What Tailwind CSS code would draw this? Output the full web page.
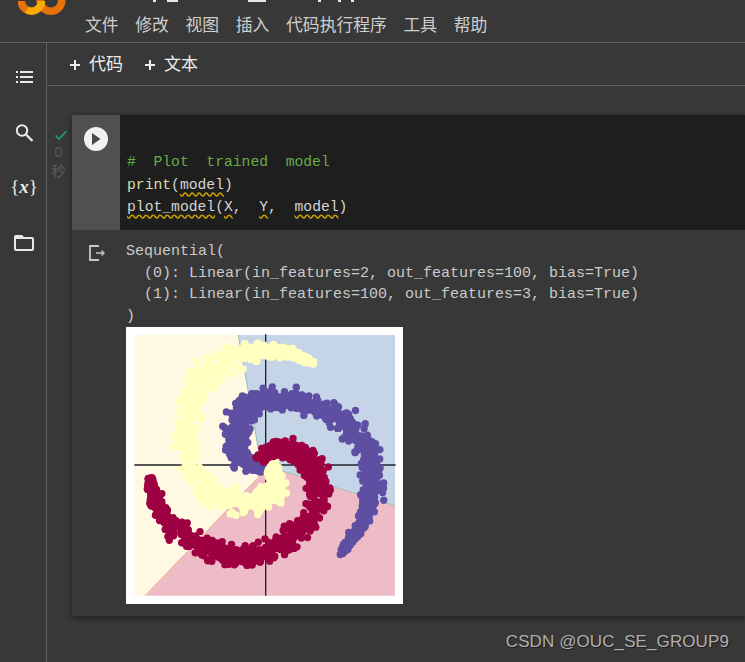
<!DOCTYPE html>
<html lang="zh">
<head>
  <meta charset="UTF-8" />
  <title>Colab</title>
  <script src="https://cdn.jsdelivr.net/npm/@tailwindcss/browser@4"></script>
</head>
<body class="bg-[#383838] h-[662px] overflow-hidden flex flex-col font-['Liberation_Sans','Noto_Sans_CJK_SC',sans-serif] text-[#d5d5d5]">

  <!-- top bar -->
  <header class="relative h-[43px] shrink-0 border-b border-[#5f5f5f] flex overflow-hidden">
    <div class="w-[85px] shrink-0 pl-[18px]">
      <svg width="48" height="16" viewBox="0 0 48 16" class="block" fill="none" stroke-width="7.500">
        <circle cx="33" cy="0.500" r="10.800" stroke="#e8710a"/>
        <path d="M3.500 1A10 10 0 0 0 8.500 9.700" stroke="#e8710a"/>
        <path d="M8.500 9.700A10 10 0 0 0 23.500 1" stroke="#f9ab00"/>
      </svg>
    </div>
    <nav class="flex gap-[16.700px] text-[16.800px] leading-[24px] pt-[14px] text-[#cfcfcf]">
      <span>文件</span><span>修改</span><span>视图</span><span>插入</span><span>代码执行程序</span><span>工具</span><span>帮助</span>
    </nav>
    <!-- bottom edge of the title, the rest is cut off by the window -->
    <div class="absolute left-[153px] top-0 flex items-start">
      <i class="w-[3px] h-[2px] bg-[#e8e8e8]"></i>
      <i class="w-[11px] h-[2px] bg-[#e8e8e8] ml-[11px]"></i>
      <i class="w-[18px] h-[2px] bg-[#e8e8e8] ml-[70px]"></i>
      <i class="w-[3px] h-[2px] bg-[#e8e8e8] ml-[52px]"></i>
      <i class="w-[3px] h-[2px] bg-[#e8e8e8] ml-[17px]"></i>
      <i class="w-[3px] h-[2px] bg-[#e8e8e8] ml-[10px]"></i>
    </div>
  </header>

  <div class="flex flex-1 min-h-0">
    <!-- side rail -->
    <aside class="w-[47px] shrink-0 border-r border-[#5f5f5f] flex flex-col items-center pt-[22px] pl-[2px] gap-[31px] text-[#e8e8e8]">
      <svg width="24" height="24" viewBox="0 0 24 24" fill="currentColor"><path d="M8 6h13v2H8zM8 11h13v2H8zM8 16h13v2H8zM4 6h2v2H4zM4 11h2v2H4zM4 16h2v2H4z"/></svg>
      <svg width="24" height="24" viewBox="0 0 24 24" fill="none" stroke="currentColor" stroke-width="2"><circle cx="10" cy="10.500" r="5.200"/><path d="M14 14.500l6.500 6.500" stroke-width="2.300"/></svg>
      <span class="h-[24px] w-[24px] flex items-center justify-center text-[19px] font-['Liberation_Serif',serif] whitespace-nowrap">{<b class="italic">x</b>}</span>
      <svg width="24" height="24" viewBox="0 0 24 24" fill="currentColor" class="mt-[1px]"><path d="M10 4H4a2 2 0 0 0-2 2v12a2 2 0 0 0 2 2h16a2 2 0 0 0 2-2V8a2 2 0 0 0-2-2h-8l-2-2zm-6 4h16v10H4V8z"/></svg>
    </aside>

    <main class="flex-1 min-w-0 flex flex-col">
      <!-- toolbar -->
      <div class="h-[43px] shrink-0 border-b border-[#5f5f5f] flex items-center pl-[22px] pt-[2px] gap-[21px] text-[17px] text-[#eeeeee]">
        <div class="flex items-center gap-[8px]">
          <svg width="12" height="12" viewBox="0 0 12 12" fill="currentColor"><path d="M5 1h2v4h4v2H7v4H5V7H1V5h4z"/></svg>
          <span>代码</span>
        </div>
        <div class="flex items-center gap-[8px]">
          <svg width="12" height="12" viewBox="0 0 12 12" fill="currentColor"><path d="M5 1h2v4h4v2H7v4H5V7H1V5h4z"/></svg>
          <span>文本</span>
        </div>
      </div>

      <!-- cell -->
      <div class="flex mt-[29px]">
        <div class="w-[25px] shrink-0 flex flex-col items-center pt-[13px] text-[#5c5c5c] text-[14px] leading-[19px]">
          <svg width="14" height="14" viewBox="0 0 14 14" fill="none" stroke="#1ea362" stroke-width="1.600" class="ml-[2px]"><path d="M1.500 7.500l3.500 3.500 7.500-8"/></svg>
          <span class="mt-[1px] -ml-[2px]">0</span>
          <span class="-ml-[2px]">秒</span>
        </div>
        <div class="flex-1 min-w-0 h-[501px] shadow-[0_2px_6px_rgba(0,0,0,0.45)]">
          <div class="flex h-[115px] bg-[#1e1e1e]">
            <div class="w-[48px] shrink-0 bg-[#505050] flex justify-center pt-[12px]">
              <div class="w-[24px] h-[24px] rounded-full bg-[#f1f1f1] flex items-center justify-center">
                <svg width="10" height="12" viewBox="0 0 10 12" fill="#4a4a4a"><path d="M1 0l8.500 6L1 12z"/></svg>
              </div>
            </div>
            <pre class="pl-[7px] pt-[36px] font-['Liberation_Mono',monospace] text-[14.700px] leading-[22.500px] text-[#d4d4d4]"><span class="text-[#67aa48]">#  Plot  trained  model</span>
<span class="text-[#dcdcaa]">print</span>(<span class="underline decoration-wavy decoration-[#c9a000] underline-offset-[3px]">model</span>)
<span class="underline decoration-wavy decoration-[#c9a000] underline-offset-[3px]">plot_model</span>(<span class="underline decoration-wavy decoration-[#c9a000] underline-offset-[3px]">X</span>,  <span class="underline decoration-wavy decoration-[#c9a000] underline-offset-[3px]">Y</span>,  <span class="underline decoration-wavy decoration-[#c9a000] underline-offset-[3px]">model</span>)</pre>
          </div>
          <div class="flex pt-[11px]">
            <div class="w-[48px] shrink-0 flex justify-center pl-[2px] pt-[1px]">
              <svg width="22" height="22" viewBox="0 0 22 22" fill="none" stroke="#c8c8c8" stroke-width="1.800"><path d="M13 4H4v14h9"/><path d="M10 11h8M15.500 8.500L18 11l-2.500 2.500" stroke-width="1.300"/></svg>
            </div>
            <div class="pl-[6px]">
              <pre class="font-['Liberation_Mono',monospace] text-[15px] leading-[21.700px] text-[#cacaca]">Sequential(
  (0): Linear(in_features=2, out_features=100, bias=True)
  (1): Linear(in_features=100, out_features=3, bias=True)
)</pre>
              <div class="w-[277px] h-[277px] bg-white -mt-[1px]">
                <svg id="plot" width="277" height="277" viewBox="18 6 831 831" class="block blur-[0.3px]">
                  <rect x="43" y="30" width="782" height="782" fill="#fff8e3"/>
                  <polygon points="355,30 825,30 825,542 445,425 420,400" fill="#c6d4e8"/>
                  <polygon points="445,425 825,542 825,812 75,812" fill="#edbcc7"/>
                  <path d="M355 30L420 400" stroke="#8fbfb0" stroke-width="3" fill="none"/>
                  <path d="M445 425L825 542" stroke="#a3c4a8" stroke-width="3" fill="none"/>
                  <path d="M445 425L75 812" stroke="#f2b98c" stroke-width="3" fill="none"/>
                  <path d="M437 28V812M43 420H827" stroke="#1f232b" stroke-width="4" fill="none"/>
                  <g id="dots"></g>
                </svg>
              </div>
            </div>
          </div>
        </div>
      </div>
    </main>
  </div>

  <div class="absolute right-[16px] top-[632px] text-[17px] leading-[20px] text-[#b0b0b0] tracking-[0.1px] [text-shadow:1px_1px_1px_rgba(0,0,0,0.5)]">CSDN @OUC_SE_GROUP9</div>

  <script>
    // scatter of the three spiral arms, seeded so every render is the same
    let seed = 12345;
    function rnd() {
      seed = (seed * 16807) % 2147483647;
      return seed / 2147483647;
    }

    const arms = [
      { color: "#5e4fa2", pts: [[430,425],[380,420],[345,370],[350,300],[385,240],[450,225],[530,222],[610,245],[680,295],[735,365],[760,440],[755,510],[735,575],[700,630],[660,690]] },
      { color: "#ffffbf", pts: [[460,425],[470,490],[430,525],[350,535],[270,505],[215,440],[195,360],[200,280],[225,190],[290,125],[360,92],[440,75],[510,85],[585,115]] },
      { color: "#9e0142", pts: [[425,400],[480,362],[545,385],[585,440],[595,510],[570,585],[510,645],[430,685],[340,695],[250,665],[170,620],[120,555],[92,490],[90,460]] },
    ];

    const dots = document.getElementById("dots");
    arms.forEach(arm => {
      const n = arm.pts.length - 1;
      for (let i = 0; i < 800; i++) {
        const t = Math.pow(rnd(), 1.15) * n;
        const k = Math.min(Math.floor(t), n - 1);
        const f = t - k;
        const a = arm.pts[k];
        const b = arm.pts[k + 1];
        // thin at the tail and right at the centre
        const spread = t < 1 ? 16 : Math.min(30, 6 + (n - t) * 7);
        const x = a[0] + (b[0] - a[0]) * f + (rnd() + rnd() - 1) * spread * 1.4;
        const y = a[1] + (b[1] - a[1]) * f + (rnd() + rnd() - 1) * spread * 1.4;
        const c = document.createElementNS("http://www.w3.org/2000/svg", "circle");
        c.setAttribute("cx", x);
        c.setAttribute("cy", y);
        c.setAttribute("r", 11);
        c.setAttribute("fill", arm.color);
        dots.appendChild(c);
      }
    });
  </script>
</body>
</html>
